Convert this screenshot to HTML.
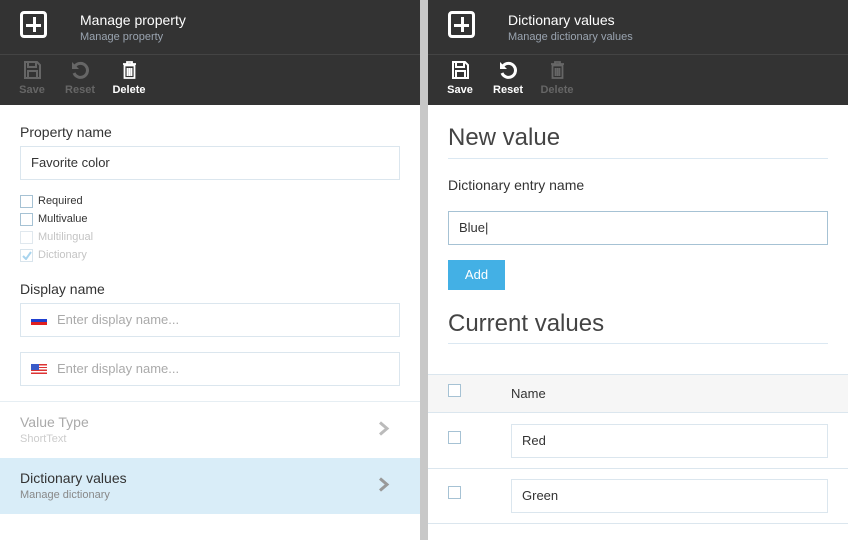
<!DOCTYPE html>
<html><head><style>
*{margin:0;padding:0;box-sizing:border-box}
body{width:848px;height:540px;overflow:hidden;background:#fff;font-family:"Liberation Sans",sans-serif;position:relative;color:#333}
.a{position:absolute}
.hd{background:#333;height:105px;top:0}
.line{height:1px;background:#444;top:54px}
.plus{width:27px;height:27px;border:3px solid #fff;border-radius:4px;top:11px}
.plus:before{content:"";position:absolute;left:10px;top:3px;width:3px;height:15px;background:#fff}
.plus:after{content:"";position:absolute;left:3px;top:10px;width:15px;height:3px;background:#fff}
.t1{color:#fff;font-size:14px;top:12px}
.t2{color:#9aa4b0;font-size:11px;top:31px}
.tb{font-size:11px;font-weight:bold;top:84px;width:40px;text-align:center}
.ic{top:61px}
.lbl{font-size:14px;color:#333}
.inp{border:1px solid #dbe6ee;height:34px;font-size:13px;padding:0 10px;line-height:32px}
.cb{width:13px;height:13px;border:1px solid #a6c2d4;background:#fff}
.cbl{font-size:11px;color:#333}
</style></head><body>
<div class="a hd" style="left:0;width:420px"></div>
<div class="a hd" style="left:428px;width:420px"></div>
<div class="a line" style="left:0;width:420px"></div>
<div class="a line" style="left:428px;width:420px"></div>
<div class="a" style="left:420px;top:0;width:8px;height:540px;background:#c8c8c8"></div>

<div class="a plus" style="left:20px"></div>
<div class="a t1" style="left:80px">Manage property</div>
<div class="a t2" style="left:80px">Manage property</div>
<div class="a plus" style="left:448px"></div>
<div class="a t1" style="left:508px">Dictionary values</div>
<div class="a t2" style="left:508px">Manage dictionary values</div>

<svg class="a ic" style="left:24px" width="17" height="18" viewBox="0 0 17 18"><path d="M1 1h12l3 3v13H1z M4 1v5h8V1 M4 10h9v7H4z" fill="none" stroke="#666" stroke-width="2"/></svg>
<div class="a tb" style="left:12px;color:#666">Save</div>
<svg class="a ic" style="left:71px" width="18" height="18" viewBox="0 0 18 18"><path d="M4 5A7 7 0 1 1 3 12" fill="none" stroke="#666" stroke-width="3"/><path d="M1 1v7h7z" fill="#666"/></svg>
<div class="a tb" style="left:60px;color:#666">Reset</div>
<svg class="a ic" style="left:122px" width="15" height="18" viewBox="0 0 15 18"><path d="M1 3h13M5 3V1h5v2M2.5 4.5h10V17h-10z M5.5 7v8M7.5 7v8M9.5 7v8" fill="none" stroke="#fff" stroke-width="1.8"/></svg>
<div class="a tb" style="left:109px;color:#fff">Delete</div>
<svg class="a ic" style="left:452px" width="17" height="18" viewBox="0 0 17 18"><path d="M1 1h12l3 3v13H1z M4 1v5h8V1 M4 10h9v7H4z" fill="none" stroke="#fff" stroke-width="2"/></svg>
<div class="a tb" style="left:440px;color:#fff">Save</div>
<svg class="a ic" style="left:499px" width="18" height="18" viewBox="0 0 18 18"><path d="M4 5A7 7 0 1 1 3 12" fill="none" stroke="#fff" stroke-width="3"/><path d="M1 1v7h7z" fill="#fff"/></svg>
<div class="a tb" style="left:488px;color:#fff">Reset</div>
<svg class="a ic" style="left:550px" width="15" height="18" viewBox="0 0 15 18"><path d="M1 3h13M5 3V1h5v2M2.5 4.5h10V17h-10z M5.5 7v8M7.5 7v8M9.5 7v8" fill="none" stroke="#666" stroke-width="1.8"/></svg>
<div class="a tb" style="left:537px;color:#666">Delete</div>

<div class="a lbl" style="left:20px;top:124px">Property name</div>
<div class="a inp" style="left:20px;top:146px;width:380px">Favorite color</div>
<div class="a cb" style="left:20px;top:195px"></div><div class="a cbl" style="left:38px;top:195px">Required</div>
<div class="a cb" style="left:20px;top:213px"></div><div class="a cbl" style="left:38px;top:213px">Multivalue</div>
<div class="a cb" style="left:20px;top:231px;border-color:#e0e8ee"></div><div class="a cbl" style="left:38px;top:231px;color:#c4c4c4">Multilingual</div>
<div class="a cb" style="left:20px;top:249px;border-color:#d8e4ec"></div><svg class="a" style="left:22px;top:251px" width="10" height="9" viewBox="0 0 10 9"><path d="M1 5l3 3 5-7" fill="none" stroke="#a8d4ee" stroke-width="2"/></svg><div class="a cbl" style="left:38px;top:249px;color:#c4c4c4">Dictionary</div>
<div class="a lbl" style="left:20px;top:281px">Display name</div>
<div class="a inp" style="left:20px;top:303px;width:380px;color:#aaa;padding-left:36px">Enter display name...</div>
<div class="a" style="left:31px;top:316px;width:16px;height:9px;background:linear-gradient(#fff 0 33%,#2040d0 33% 66%,#e02020 66%)"></div>
<div class="a inp" style="left:20px;top:352px;width:380px;color:#aaa;padding-left:36px">Enter display name...</div>
<div class="a" style="left:31px;top:364px;width:16px;height:10px;background:repeating-linear-gradient(#d33 0 1.4px,#fff 1.4px 2.8px)"></div>
<div class="a" style="left:31px;top:364px;width:8px;height:6px;background:#3a5bc8"></div>
<div class="a" style="left:0;top:401px;width:420px;height:1px;background:#e6eef3"></div>
<div class="a" style="left:20px;top:414px;font-size:14px;color:#aaa">Value Type</div>
<div class="a" style="left:20px;top:433px;font-size:11px;color:#ccc">ShortText</div>
<svg class="a" style="left:378px;top:421px" width="12" height="15" viewBox="0 0 12 15"><path d="M2 1.5l7 6-7 6" fill="none" stroke="#bbb" stroke-width="3"/></svg>
<div class="a" style="left:0;top:458px;width:420px;height:56px;background:#d9edf8"></div>
<div class="a" style="left:20px;top:470px;font-size:14px;color:#333">Dictionary values</div>
<div class="a" style="left:20px;top:489px;font-size:11px;color:#888">Manage dictionary</div>
<svg class="a" style="left:378px;top:477px" width="12" height="15" viewBox="0 0 12 15"><path d="M2 1.5l7 6-7 6" fill="none" stroke="#999" stroke-width="3"/></svg>

<div class="a" style="left:448px;top:124px;font-size:24px;color:#444">New value</div>
<div class="a" style="left:448px;top:158px;width:380px;height:1px;background:#dbe8f2"></div>
<div class="a lbl" style="left:448px;top:177px">Dictionary entry name</div>
<div class="a inp" style="left:448px;top:211px;width:380px;border-color:#a6c2d4">Blue|</div>
<div class="a" style="left:448px;top:260px;width:57px;height:30px;background:#43b0e5;color:#fff;font-size:13px;text-align:center;line-height:30px">Add</div>
<div class="a" style="left:448px;top:310px;font-size:24px;color:#444">Current values</div>
<div class="a" style="left:448px;top:343px;width:380px;height:1px;background:#dbe8f2"></div>
<div class="a" style="left:428px;top:374px;width:420px;height:39px;background:#f6f6f6;border-top:1px solid #dbe6ee;border-bottom:1px solid #dbe6ee"></div>
<div class="a cb" style="left:448px;top:384px"></div>
<div class="a" style="left:511px;top:386px;font-size:13px">Name</div>
<div class="a cb" style="left:448px;top:431px"></div>
<div class="a inp" style="left:511px;top:424px;width:317px">Red</div>
<div class="a" style="left:428px;top:468px;width:420px;height:1px;background:#dbe6ee"></div>
<div class="a cb" style="left:448px;top:486px"></div>
<div class="a inp" style="left:511px;top:479px;width:317px">Green</div>
<div class="a" style="left:428px;top:523px;width:420px;height:1px;background:#dbe6ee"></div>
</body></html>
